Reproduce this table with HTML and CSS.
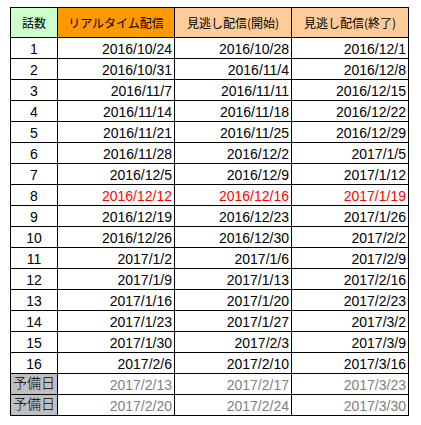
FILE: index.html
```html
<!DOCTYPE html>
<html lang="ja">
<head>
<meta charset="utf-8">
<link rel="stylesheet" href="styles.css">
</head>
<body>
<table class="sched">
  <colgroup>
    <col class="c-no">
    <col class="c-date">
    <col class="c-date">
    <col class="c-date">
  </colgroup>
  <thead>
    <tr class="head">
      <th class="h-no">話数</th>
      <th class="h-live">リアルタイム配信</th>
      <th class="h-miss">見逃し配信(開始)</th>
      <th class="h-miss">見逃し配信(終了)</th>
    </tr>
  </thead>
  <tbody>
    <tr><td class="no">1</td><td>2016/10/24</td><td>2016/10/28</td><td>2016/12/1</td></tr>
    <tr><td class="no">2</td><td>2016/10/31</td><td>2016/11/4</td><td>2016/12/8</td></tr>
    <tr><td class="no">3</td><td>2016/11/7</td><td>2016/11/11</td><td>2016/12/15</td></tr>
    <tr><td class="no">4</td><td>2016/11/14</td><td>2016/11/18</td><td>2016/12/22</td></tr>
    <tr><td class="no">5</td><td>2016/11/21</td><td>2016/11/25</td><td>2016/12/29</td></tr>
    <tr><td class="no">6</td><td>2016/11/28</td><td>2016/12/2</td><td>2017/1/5</td></tr>
    <tr><td class="no">7</td><td>2016/12/5</td><td>2016/12/9</td><td>2017/1/12</td></tr>
    <tr class="red"><td class="no">8</td><td>2016/12/12</td><td>2016/12/16</td><td>2017/1/19</td></tr>
    <tr><td class="no">9</td><td>2016/12/19</td><td>2016/12/23</td><td>2017/1/26</td></tr>
    <tr><td class="no">10</td><td>2016/12/26</td><td>2016/12/30</td><td>2017/2/2</td></tr>
    <tr><td class="no">11</td><td>2017/1/2</td><td>2017/1/6</td><td>2017/2/9</td></tr>
    <tr><td class="no">12</td><td>2017/1/9</td><td>2017/1/13</td><td>2017/2/16</td></tr>
    <tr><td class="no">13</td><td>2017/1/16</td><td>2017/1/20</td><td>2017/2/23</td></tr>
    <tr><td class="no">14</td><td>2017/1/23</td><td>2017/1/27</td><td>2017/3/2</td></tr>
    <tr><td class="no">15</td><td>2017/1/30</td><td>2017/2/3</td><td>2017/3/9</td></tr>
    <tr><td class="no">16</td><td>2017/2/6</td><td>2017/2/10</td><td>2017/3/16</td></tr>
    <tr class="spare"><td class="no">予備日</td><td>2017/2/13</td><td>2017/2/17</td><td>2017/3/23</td></tr>
    <tr class="spare"><td class="no">予備日</td><td>2017/2/20</td><td>2017/2/24</td><td>2017/3/30</td></tr>
  </tbody>
</table>
</body>
</html>
```
FILE: styles.css
```css
html, body {
  margin: 0;
  padding: 0;
  background: #fff;
}
body {
  padding: 7px 0 0 10px;
  font-family: "Liberation Sans", "Noto Sans CJK JP", sans-serif;
  font-size: 14px;
  color: #000;
}
.sched {
  border-collapse: collapse;
  table-layout: fixed;
  width: 399px;
}
.c-no { width: 47px; }
.c-date { width: 117px; }
.sched th,
.sched td {
  border: 1px solid #000;
  white-space: nowrap;
  overflow: hidden;
}
.sched th {
  height: 29px;
  font-weight: normal;
  font-size: 12px;
  text-align: center;
  padding: 0;
  font-family: "Noto Sans CJK JP", "Liberation Sans", sans-serif;
  line-height: 14px;
}
.h-no { background: #ccffcc; }
.h-live { background: #ff9900; }
.h-miss { background: #ffcc99; }
.sched tbody tr { height: 21px; }
.sched td {
  height: 17px;
  text-align: right;
  line-height: 16px;
  padding: 3px 2px 0 0;
  vertical-align: top;
}
.sched td.no {
  text-align: center;
  padding-right: 0;
  color: #000;
}
.red td { color: #ff0000; }
.spare td { color: #808080; }
.spare td.no {
  background: #c0c0c0;
  color: #000;
  font-weight: 300;
  padding-top: 1px;
  height: 19px;
}
```
